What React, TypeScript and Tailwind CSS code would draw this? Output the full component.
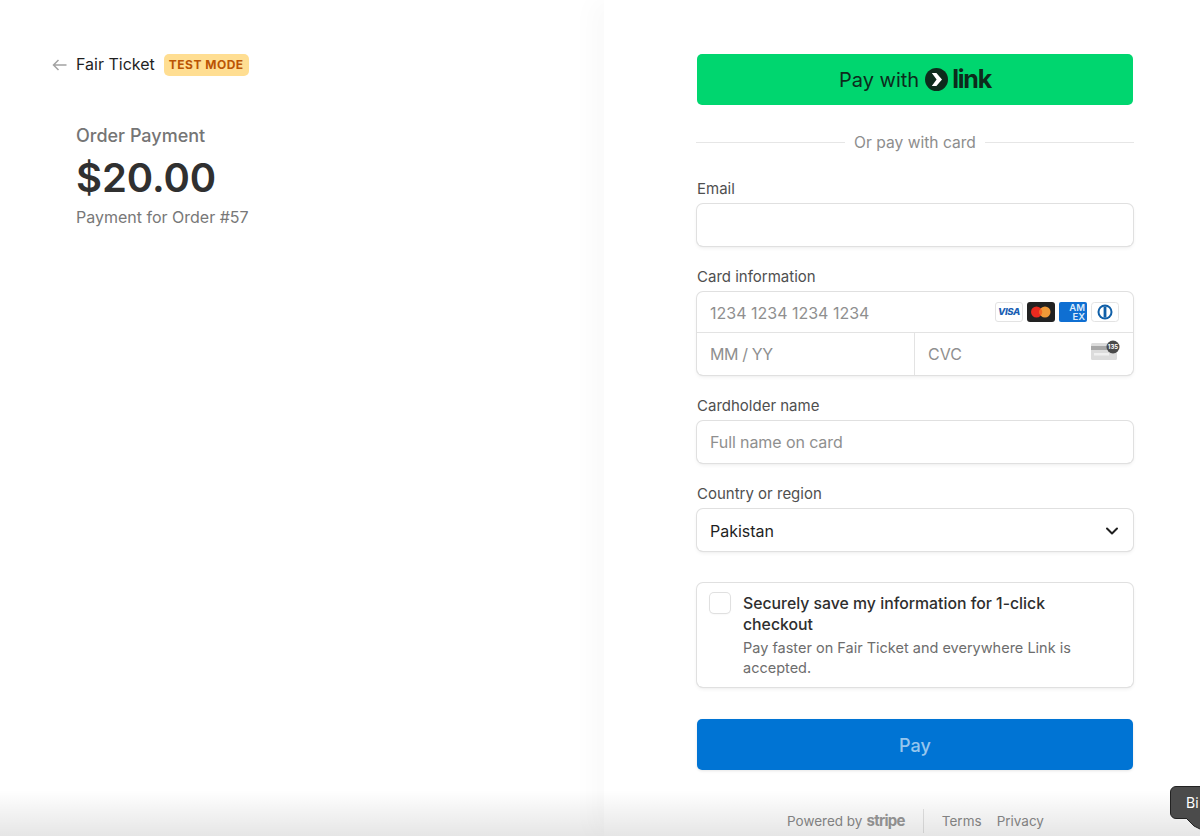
import React from 'react';

const fieldShadow = 'shadow-[0_0_0_1px_#e0e0e0,0_2px_4px_rgba(0,0,0,0.07),0_1px_1.5px_rgba(0,0,0,0.05)]';

const Label = ({ children }: { children: React.ReactNode }) => (
  <div className="text-[15px] leading-[17px] text-[#4f4f4f] mb-[7px] pl-px">{children}</div>
);

const LinkLogo = () => (
  <span className="flex items-center ml-[6px]">
    <svg width="23" height="23" viewBox="0 0 23 23">
      <circle cx="11.5" cy="11.5" r="11.5" fill="#0d2b1c" />
      <path d="M6.8 5h4.6l5.6 6.5-5.6 6.5H6.8l4.8-6.5z" fill="#fff" />
    </svg>
    <span className="ml-[4px] text-[25px] leading-none font-bold tracking-[-1.2px] text-[#0d2b1c]">link</span>
  </span>
);

const CardIcons = () => (
  <div className="flex gap-[4px]">
    <span className="w-[28px] h-[20px] rounded-[3px] bg-white border border-[#e3e3e3] flex items-center justify-center">
      <span className="text-[9.5px] font-extrabold italic text-[#1a5fb4] tracking-[-0.3px]">VISA</span>
    </span>
    <svg width="28" height="20" viewBox="0 0 28 20">
      <rect width="28" height="20" rx="3" fill="#222" />
      <circle cx="9.5" cy="10" r="5.5" fill="#eb2a1f" />
      <circle cx="18" cy="10" r="5.5" fill="#f09a38" />
      <path d="M13.7 6.4a5.5 5.5 0 0 1 0 7.2 5.5 5.5 0 0 1 0-7.2z" fill="#f26522" />
    </svg>
    <span className="w-[28px] h-[20px] rounded-[2px] bg-[#0f6fd2] flex flex-col items-end justify-center pr-[2px] text-[9.5px] leading-[9px] font-semibold text-[#dcebfa]">
      <span>AM</span>
      <span>EX</span>
    </span>
    <svg width="28" height="20" viewBox="0 0 28 20">
      <rect x="0.5" y="0.5" width="27" height="19" rx="3" fill="#fff" stroke="#e3e3e3" />
      <circle cx="14" cy="10" r="7.5" fill="#0f5fa8" />
      <circle cx="14" cy="10" r="5.5" fill="#fff" />
      <rect x="12.6" y="4.5" width="2.8" height="11" fill="#0f5fa8" />
    </svg>
  </div>
);

const CvcIcon = () => (
  <svg width="28" height="24" viewBox="0 0 28 24" className="overflow-visible shrink-0">
    <rect x="0" y="1" width="26" height="17" rx="1.5" fill="#dcdcdc" />
    <rect x="0" y="4" width="26" height="4" fill="#a8a8a8" />
    <rect x="3" y="11" width="15" height="2.5" fill="#f0f0f0" />
    <circle cx="22" cy="5" r="6.5" fill="#4a4a4a" />
    <text x="22" y="7.2" textAnchor="middle" fontSize="6" fontWeight="700" fill="#fff">135</text>
  </svg>
);

const inputClass = 'w-full h-full bg-transparent outline-none px-[13px] text-[16px] text-[#1a1a1a] placeholder:text-[#8f8f8f]';

export default function App() {
  return (
    <div className="relative w-[1200px] h-[836px] overflow-hidden bg-white flex font-['Inter',sans-serif]">
      {/* Summary */}
      <div className="w-[604px] shrink-0 pt-[54px] pl-[52px]">
        <div className="flex items-center h-[22px]">
          <svg width="15" height="12" viewBox="0 0 15 12" fill="none" stroke="#a3a3a3" strokeWidth="1.5">
            <path d="M14.5 6H1.5M6.5 1 1.5 6l5 5" />
          </svg>
          <span className="ml-[9px] pb-[2px] text-[16px] text-[#1f1f1f]">Fair Ticket</span>
          <span className="ml-[9px] h-[22px] px-[5px] rounded-[5px] bg-[#ffde92] text-[#bb5504] text-[12px] leading-[22px] font-bold tracking-[0.5px]">
            TEST MODE
          </span>
        </div>
        <div className="pl-[24px] mt-[48px]">
          <div className="text-[18px] leading-[24px] font-medium text-[#757575]">Order Payment</div>
          <div className="mt-[6px] text-[40px] leading-[48px] font-semibold text-[#303030] tracking-[-0.1px]">$20.00</div>
          <div className="mt-[5px] text-[16px] leading-[20px] text-[#787878]">Payment for Order #57</div>
        </div>
      </div>

      {/* Checkout form */}
      <div className="flex-1 pt-[54px] pl-[92px] shadow-[-12px_0_24px_rgba(0,0,0,0.025)]">
        <div className="w-[438px]">
          <div className="px-px">
            <button className="w-full h-[51px] rounded-[5px] bg-[#00d66f] flex items-center justify-center text-[20px] text-[#0d2b1c]">
              Pay with
              <LinkLogo />
            </button>
          </div>

          <div className="flex items-center mt-[27px] h-[20px] text-[#8d8d8d] text-[15.6px]">
            <div className="flex-1 h-px bg-[#e6e6e6]" />
            <span className="px-[9px] pt-[2px]">Or pay with card</span>
            <div className="flex-1 h-px bg-[#e6e6e6]" />
          </div>

          <div className="mt-[28px]">
            <Label>Email</Label>
            <div className={`h-[42px] mx-px rounded-[6px] mt-px ${fieldShadow}`}>
              <input className={inputClass} />
            </div>
          </div>

          <div className="mt-[22px]">
            <Label>Card information</Label>
            <div className={`mx-px rounded-[6px] ${fieldShadow}`}>
              <div className="h-[40px] flex items-center pr-[14px]">
                <input className={`${inputClass} pt-[2px]`} placeholder="1234 1234 1234 1234" />
                <CardIcons />
              </div>
              <div className="h-[43px] flex border-t border-[#e3e3e3]">
                <div className="w-[218px] border-r border-[#e3e3e3]">
                  <input className={`${inputClass} tracking-[-0.4px]`} placeholder="MM / YY" />
                </div>
                <div className="flex-1 flex items-center pr-[14px]">
                  <input className={inputClass} placeholder="CVC" />
                  <CvcIcon />
                </div>
              </div>
            </div>
          </div>

          <div className="mt-[22px]">
            <Label>Cardholder name</Label>
            <div className={`h-[42px] mx-px rounded-[6px] ${fieldShadow}`}>
              <input className={`${inputClass} tracking-[-0.1px]`} placeholder="Full name on card" />
            </div>
          </div>

          <div className="mt-[22px]">
            <Label>Country or region</Label>
            <div className={`h-[42px] mx-px rounded-[6px] flex items-center justify-between pl-[13px] pr-[14px] pt-[2px] text-[16px] text-[#1f1f1f] ${fieldShadow}`}>
              <span>Pakistan</span>
              <svg width="14" height="14" viewBox="0 0 14 14" fill="none" stroke="#1f1f1f" strokeWidth="2" strokeLinecap="round" strokeLinejoin="round">
                <path d="M2 4.5 7 9.5l5-5" />
              </svg>
            </div>
          </div>

          <div className={`mt-[32px] mx-px h-[104px] rounded-[6px] flex pl-[13px] pt-[10px] pr-[40px] ${fieldShadow}`}>
            <div className="w-[20px] h-[20px] shrink-0 rounded-[4px] shadow-[0_0_0_1px_#e0e0e0,0_1px_2px_rgba(0,0,0,0.08)]" />
            <div className="ml-[13px]">
              <div className="text-[15.8px] leading-[21px] font-medium text-[#2e2e2e]">
                Securely save my information for 1-click checkout
              </div>
              <div className="mt-[3px] text-[14.5px] leading-[20px] text-[#6d6d6d]">
                Pay faster on Fair Ticket and everywhere Link is accepted.
              </div>
            </div>
          </div>

          <div className="mt-[32px] px-px">
            <button className="w-full h-[51px] pt-[2px] rounded-[5px] bg-[#0074d4] text-[18px] font-medium text-white/60 shadow-[0_1px_3px_rgba(0,0,0,0.1)]">
              Pay
            </button>
          </div>

          <div className="mt-[39px] flex items-center text-[13.5px] text-[#8a8a8a] pl-[91px]">
            <span>Powered by</span>
            <span className="ml-[4px] text-[15px] leading-[20px] font-bold tracking-[-0.7px] text-[#9a9a9a]">stripe</span>
            <div className="w-px h-[24px] bg-[#e3e3e3] mx-[18px]" />
            <span>Terms</span>
            <span className="ml-[15px]">Privacy</span>
          </div>
        </div>
      </div>

      {/* Bottom fade */}
      <div className="absolute left-0 right-0 bottom-0 h-[46px] pointer-events-none bg-gradient-to-b from-transparent to-black/10" />

      {/* Tooltip cut off by the window */}
      <div className="absolute left-[1170px] top-[786px] w-[60px] h-[33px] rounded-[6px] bg-[#4b4b4b] border border-[#222] text-white text-[14px] leading-[32px] pl-[15px]">
        Bi
      </div>
      <svg className="absolute left-[1186px] top-[817px]" width="14" height="14" viewBox="0 0 14 14">
        <path d="M0 1 8 9l6 3V1z" fill="#4b4b4b" />
        <path d="M0 1 8 9l6 3" fill="none" stroke="#222" />
      </svg>
    </div>
  );
}
